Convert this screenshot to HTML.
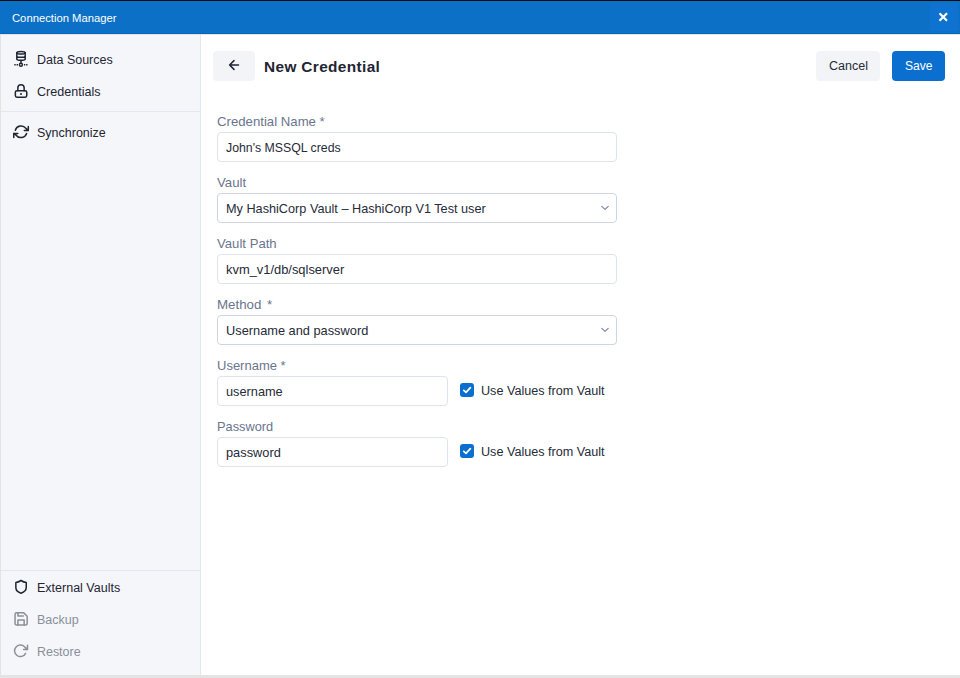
<!DOCTYPE html>
<html><head><meta charset="utf-8">
<style>
*{box-sizing:border-box;margin:0;padding:0}
html,body{width:960px;height:678px;overflow:hidden;background:#fff;font-family:"Liberation Sans",sans-serif}
.abs{position:absolute}
.t{position:absolute;white-space:pre;line-height:14px}
#top{left:0;top:0;width:960px;height:1px;background:#0a0a0a}
#hdr{left:0;top:1px;width:960px;height:33px;background:#0c71c6}
#hdrline{left:0;top:33px;width:960px;height:1px;background:#0067c7}
#hdrsh{left:0;top:34px;width:960px;height:1px;background:#e6e2dd}
#closebox{left:930px;top:3px;width:28px;height:28px;background:#0d72d0}
#side{left:0;top:35px;width:200px;height:640px;background:#f4f6fa}
#sideb{left:200px;top:35px;width:1px;height:640px;background:#e3e7ee}
#leftedge{left:0;top:35px;width:1px;height:643px;background:#e3e3e3}
#bot{left:0;top:675px;width:960px;height:3px;background:#e4e4e4}
.sep{left:1px;width:199px;height:1px;background:#e2e7f0}
.nav{color:#1f2533;font-size:12.4px}
.dis{color:#8a8f99}
.lbl{color:#6a758e;font-size:12.6px}
.val{color:#252b37;font-size:12.6px}
.inp{position:absolute;border:1px solid #dde4ef;border-radius:4px;background:#fff;height:30px}
.sel{border-color:#cdd6e6}
.btn{position:absolute;border-radius:4px;height:30px}
.cb{position:absolute;width:14px;height:14px;border-radius:3px;background:#0b6fd0}
</style></head><body>
<div id="top" class="abs"></div>
<div id="hdr" class="abs"></div>
<div id="hdrline" class="abs"></div>
<div id="hdrsh" class="abs"></div>
<div id="closebox" class="abs"></div>
<div class="t" style="left:12px;top:11px;color:#fff;font-size:11.25px">Connection Manager</div>
<svg class="abs" style="left:938px;top:12px" width="11" height="10" viewBox="0 0 11 10"><path d="M1.5 1.2L9 8.8M9 1.2L1.5 8.8" stroke="#fff" stroke-width="2.2" fill="none"/></svg>

<div id="side" class="abs"></div>
<div id="sideb" class="abs"></div>
<div id="leftedge" class="abs"></div>
<div class="sep abs" style="top:111px"></div>
<div class="sep abs" style="top:570px"></div>

<!-- nav items -->
<div class="t nav" style="left:37px;top:53px;font-size:12.5px">Data Sources</div>
<div class="t nav" style="left:37px;top:85px;font-size:12.55px">Credentials</div>
<div class="t nav" style="left:37px;top:126px;font-size:12.5px">Synchronize</div>
<div class="t nav" style="left:37px;top:581px;font-size:12.5px">External Vaults</div>
<div class="t nav dis" style="left:37px;top:613px;font-size:12.5px">Backup</div>
<div class="t nav dis" style="left:37px;top:645px;font-size:12.45px">Restore</div>


<svg class="abs" style="left:0;top:0" width="200" height="678" viewBox="0 0 200 678" fill="none" stroke-linecap="round" stroke-linejoin="round">
 <g stroke="#1f2533" stroke-width="1.5">
  <ellipse cx="21" cy="52.8" rx="4.2" ry="1.3"/>
  <path d="M16.8 52.8V59a4.2 1.3 0 0 0 8.4 0V52.8M16.8 55.9a4.2 1.3 0 0 0 8.4 0"/>
  <path d="M21 60.8v2.1"/>
  <circle cx="20.9" cy="64.8" r="1.5" stroke-width="1.4"/>
  <path d="M14.3 64.8h1.4M16.6 64.8h1.4M23.9 64.8h1.4M26.1 64.8h1.4" stroke-linecap="butt" stroke-width="1.5"/>
  <rect x="15.35" y="90.75" width="11.4" height="6.4" rx="1.6"/>
  <path d="M17.85 90.75V87.8a3.15 3.15 0 0 1 6.3 0v2.95"/>
  <path d="M15.3 130.3A6 6 0 0 1 25.9 128.4L28.3 130.5M28.3 126.4V130.5H24.3"/>
  <path d="M26.6 133.4A6 6 0 0 1 16.1 135.2L13.75 133.5M13.75 137.5V133.5H17.8"/>
  <path d="M21 580.5C19 581.8 17.6 582.3 15.85 582.5V587.6C15.85 590.4 18 592.3 21 593.25C24 592.3 26.25 590.4 26.25 587.6V582.5C24.4 582.3 23 581.8 21 580.5Z"/>
 </g>
 <circle cx="21" cy="94" r="1" fill="#1f2533"/>
 <g stroke="#8b9099" stroke-width="1.5">
  <path d="M16.6 612.85H23.8L27.15 616.2V623.4A1.55 1.55 0 0 1 25.6 624.95H16.6A1.55 1.55 0 0 1 15.05 623.4V614.4A1.55 1.55 0 0 1 16.6 612.85Z"/>
  <path d="M17.95 612.85V616.1H23.4M17.95 624.95V620.1H24.15V624.95"/>
  <path d="M25.6 653.3A5.8 5.8 0 1 1 25.1 647.4L27.5 649.6M27.5 645.2V649.6H23.6"/>
 </g>
</svg>
<div id="bot" class="abs"></div>

<!-- main -->
<div class="btn" style="left:213px;top:51px;width:42px;background:#f3f4f8"></div>
<div class="t" style="left:264px;top:59px;color:#1f2533;font-weight:700;line-height:16px;font-size:15.4px;letter-spacing:0.36px">New Credential</div>
<div class="btn" style="left:816px;top:51px;width:64px;background:#f3f4f8"></div>
<div class="t val" style="left:829px;top:59px;font-size:12.5px">Cancel</div>
<div class="btn" style="left:892px;top:51px;width:53px;background:#0b6fcf"></div>
<div class="t val" style="left:905px;top:59px;color:#fff;font-size:12.1px">Save</div>

<div class="t lbl" style="left:217px;top:115px;font-size:13.2px">Credential Name *</div>
<div class="inp" style="left:217px;top:132px;width:400px"></div>
<div class="t val" style="left:226px;top:141px;font-size:12.3px">John's MSSQL creds</div>

<div class="t lbl" style="left:217px;top:176px;font-size:13.2px">Vault</div>
<div class="inp sel" style="left:217px;top:193px;width:400px"></div>
<div class="t val" style="left:226px;top:202px;font-size:12.7px">My HashiCorp Vault – HashiCorp V1 Test user</div>

<div class="t lbl" style="left:217px;top:237px;font-size:13.15px">Vault Path</div>
<div class="inp" style="left:217px;top:254px;width:400px"></div>
<div class="t val" style="left:226px;top:263px;font-size:12.9px">kvm_v1/db/sqlserver</div>

<div class="t lbl" style="left:217px;top:298px;font-size:13.3px;word-spacing:2px">Method *</div>
<div class="inp sel" style="left:217px;top:315px;width:400px"></div>
<div class="t val" style="left:226px;top:324px;font-size:12.8px">Username and password</div>

<div class="t lbl" style="left:217px;top:359px;font-size:13.0px">Username *</div>
<div class="inp" style="left:217px;top:376px;width:231px"></div>
<div class="t val" style="left:226px;top:385px;font-size:12.75px">username</div>
<div class="cb" style="left:460px;top:383px"></div>
<div class="t val" style="left:481px;top:384px;font-size:12.62px">Use Values from Vault</div>

<div class="t lbl" style="left:217px;top:420px;font-size:12.8px">Password</div>
<div class="inp" style="left:217px;top:437px;width:231px"></div>
<div class="t val" style="left:226px;top:446px;font-size:12.8px">password</div>
<div class="cb" style="left:460px;top:444px"></div>
<div class="t val" style="left:481px;top:445px;font-size:12.62px">Use Values from Vault</div>


<svg class="abs" style="left:200px;top:0" width="760" height="678" viewBox="200 0 760 678" fill="none" stroke-linecap="round" stroke-linejoin="round">
 <path d="M238.5 65H229.6M234 60.6L229.6 65L234 69.4" stroke="#1f2533" stroke-width="1.5"/>
 <path d="M601.8 206.3L605 209.3L608.2 206.3M601.8 328.3L605 331.3L608.2 328.3" stroke="#7687a8" stroke-width="1.15"/>
 <path d="M463.8 390.3L466 392.4L470.4 387.6M463.8 451.3L466 453.4L470.4 448.6" stroke="#fff" stroke-width="1.7"/>
</svg>
</body></html>
